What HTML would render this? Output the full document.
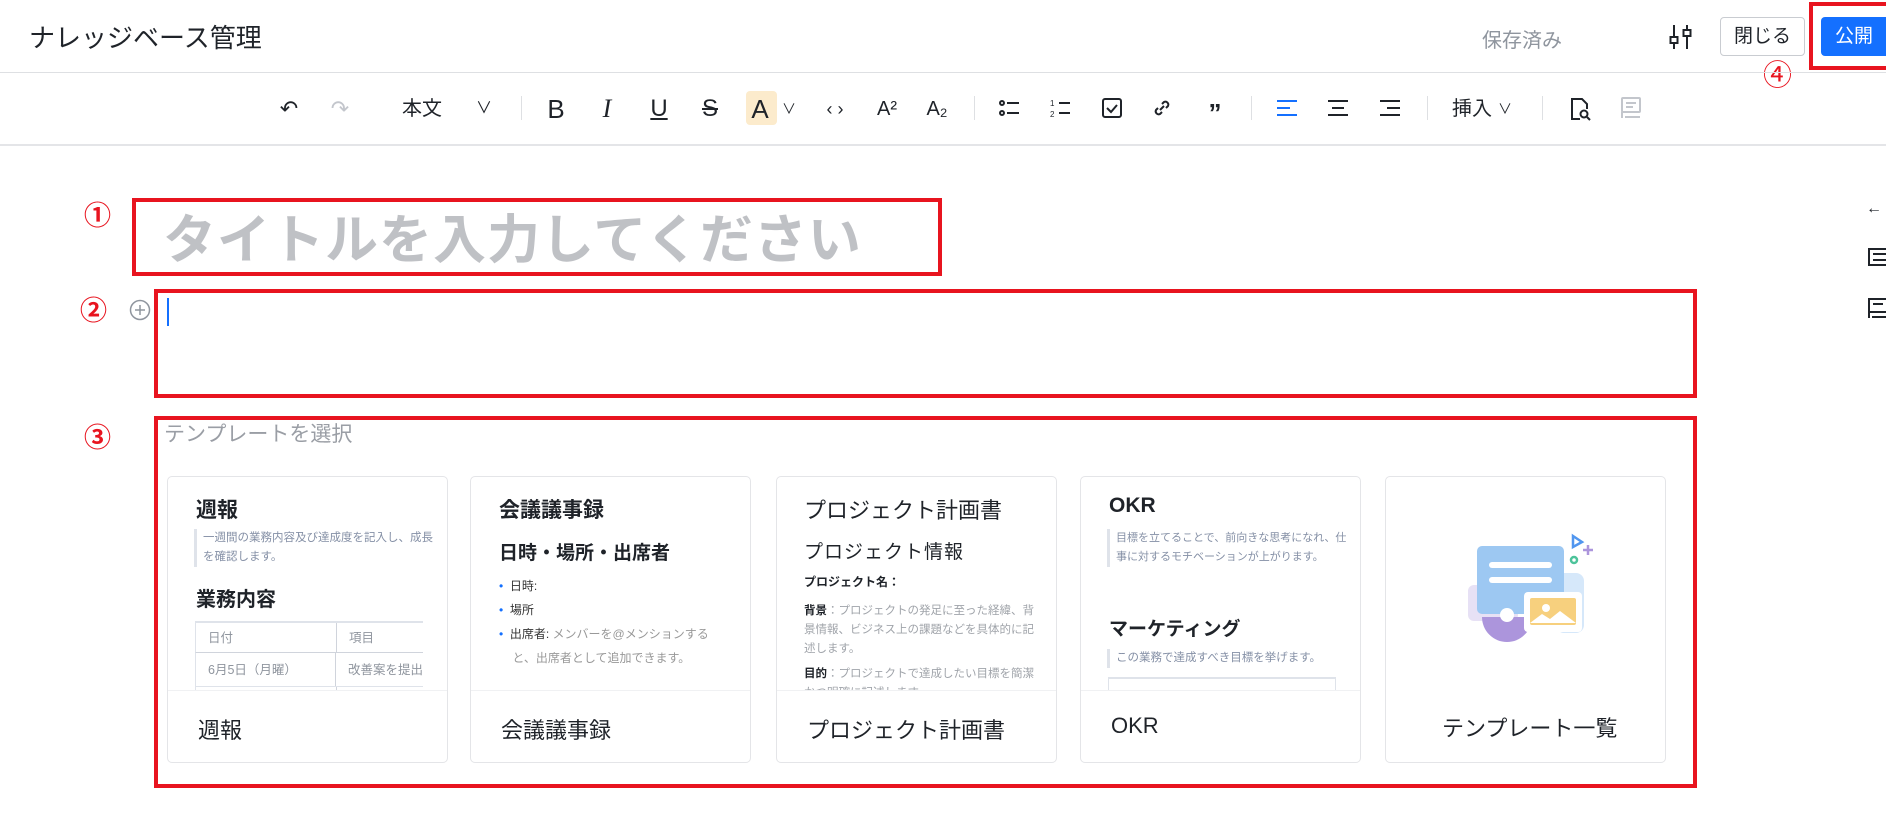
<!DOCTYPE html>
<html><head><meta charset="utf-8"><style>
*{box-sizing:border-box;margin:0;padding:0}
body{width:1886px;height:813px;background:#fff;position:relative;overflow:hidden;font-family:"Liberation Sans","Noto Sans CJK JP",sans-serif;color:#1f2329}
.a{position:absolute;white-space:nowrap}
.red{position:absolute;border:4px solid #e8141f}
.num{position:absolute;color:#e8141f;font-size:27px;font-weight:bold;line-height:1}
.tb{position:absolute;top:92px;height:34px;line-height:34px;font-size:22px;color:#1f2329;transform:translateX(-50%);text-align:center}
.sep{position:absolute;top:96px;width:1px;height:24px;background:#dee0e3}
.card{position:absolute;top:476px;width:281px;height:287px;border:1px solid #e4e5e8;border-radius:5px;overflow:hidden;background:#fff}
.card .top{position:absolute;left:0;top:0;width:100%;height:213px;overflow:hidden}
.card .lbl{position:absolute;left:30px;top:236px;font-size:22px;color:#1f2329}
.card .ln{position:absolute;left:0;right:0;top:213px;height:1px;background:#f0f1f3}
.h{position:absolute;left:28px;font-weight:bold;font-size:21px;color:#1f2329}
.q{position:absolute;left:26px;border-left:3px solid #dfe3ea;padding-left:6px;font-size:11.5px;line-height:19px;color:#8590a6}
.s{font-size:12px;color:#333}
</style></head><body>
<div class="a" style="left:29px;top:18px;font-size:26px;color:#1f2329">ナレッジベース管理</div>
<div class="a" style="left:1482px;top:24px;font-size:20px;color:#8f959e">保存済み</div>
<svg class="a" style="left:1668px;top:23px" width="26" height="28" viewBox="0 0 26 28" fill="none" stroke="#1f2329" stroke-width="2"><line x1="6" y1="2" x2="6" y2="26"/><rect x="2.5" y="14" width="7" height="6" fill="#fff"/><line x1="19" y1="2" x2="19" y2="26"/><rect x="15.5" y="7" width="7" height="6" fill="#fff"/></svg>
<div class="a" style="left:1720px;top:17px;width:85px;height:39px;border:1px solid #c9ccd1;border-radius:4px;font-size:19px;line-height:37px;text-align:center;color:#1f2329">閉じる</div>
<div class="a" style="left:1821px;top:17px;width:70px;height:39px;background:#1470ff;border-radius:4px;font-size:19px;line-height:39px;color:#fff;padding-left:14px">公開</div>
<div class="red" style="left:1809px;top:2px;width:82px;height:68px"></div>
<div class="num" style="left:1763px;top:62px;font-size:29px;font-weight:normal">④</div>
<div class="a" style="left:0;top:72px;width:1886px;height:1px;background:#dee0e3"></div>
<div class="a" style="left:0;top:144px;width:1886px;height:2px;background:#e4e5e8"></div>

<div class="a" style="left:746px;top:91px;width:31px;height:34px;background:#fcebcc;border-radius:4px"></div>
<div class="tb" style="left:289px">↶</div>
<div class="tb" style="left:340px;color:#c3c6cc">↷</div>
<div class="tb" style="left:422px;font-size:20px">本文</div>
<div class="tb" style="left:484px;font-size:16px">∨</div>
<div class="sep" style="left:521px"></div>
<div class="tb" style="left:556px;font-size:26px">B</div>
<div class="tb" style="left:607px;font-size:26px;font-style:italic;font-family:'Liberation Serif',serif">I</div>
<div class="tb" style="left:659px;font-size:24px;text-decoration:underline">U</div>
<div class="tb" style="left:710px;font-size:24px;text-decoration:line-through">S</div>
<div class="tb" style="left:760px;font-size:26px">A</div>
<div class="tb" style="left:789px;font-size:14px">∨</div>
<div class="tb" style="left:835px;font-size:18px">‹ ›</div>
<div class="tb" style="left:887px;font-size:20px">A²</div>
<div class="tb" style="left:937px;font-size:20px">A₂</div>
<div class="sep" style="left:974px"></div>
<svg class="a" style="left:999px;top:99px" width="20" height="18" fill="none" stroke="#1f2329" stroke-width="2"><circle cx="3" cy="4" r="2"/><circle cx="3" cy="14" r="2"/><line x1="8" y1="4" x2="20" y2="4"/><line x1="8" y1="14" x2="20" y2="14"/></svg>
<svg class="a" style="left:1050px;top:98px" width="20" height="20" fill="none" stroke="#1f2329" stroke-width="2"><line x1="9" y1="5" x2="20" y2="5"/><line x1="9" y1="15" x2="20" y2="15"/><text x="0" y="8" font-size="8" fill="#1f2329" stroke="none">1</text><text x="0" y="19" font-size="8" fill="#1f2329" stroke="none">2</text></svg>
<svg class="a" style="left:1102px;top:98px" width="20" height="20" fill="none" stroke="#1f2329" stroke-width="2"><rect x="1" y="1" width="18" height="18" rx="2"/><path d="M5 10l4 4 6-7"/></svg>
<svg class="a" style="left:1152px;top:98px" width="20" height="20" fill="none" stroke="#1f2329" stroke-width="2"><path d="M8 12l4-4M6 10l-2 2a3 3 0 004 4l2-2M14 10l2-2a3 3 0 00-4-4l-2 2"/></svg>
<div class="tb" style="left:1215px;font-size:26px;font-weight:bold;top:96px">”</div>
<div class="sep" style="left:1251px"></div>
<svg class="a" style="left:1277px;top:99px" width="20" height="18" stroke="#1470ff" stroke-width="2"><line x1="0" y1="2" x2="20" y2="2"/><line x1="0" y1="9" x2="13" y2="9"/><line x1="0" y1="16" x2="20" y2="16"/></svg>
<svg class="a" style="left:1328px;top:99px" width="20" height="18" stroke="#1f2329" stroke-width="2"><line x1="0" y1="2" x2="20" y2="2"/><line x1="4" y1="9" x2="16" y2="9"/><line x1="0" y1="16" x2="20" y2="16"/></svg>
<svg class="a" style="left:1380px;top:99px" width="20" height="18" stroke="#1f2329" stroke-width="2"><line x1="0" y1="2" x2="20" y2="2"/><line x1="7" y1="9" x2="20" y2="9"/><line x1="0" y1="16" x2="20" y2="16"/></svg>
<div class="sep" style="left:1427px"></div>
<div class="tb" style="left:1472px;font-size:20px">挿入</div>
<div class="tb" style="left:1505px;font-size:14px">∨</div>
<div class="sep" style="left:1542px"></div>
<svg class="a" style="left:1570px;top:97px" width="22" height="24" fill="none" stroke="#1f2329" stroke-width="2"><path d="M10 22H2V2h10l5 5v5"/><circle cx="14" cy="17" r="3.5"/><line x1="17" y1="20" x2="20" y2="23"/></svg>
<svg class="a" style="left:1621px;top:97px" width="20" height="22" fill="none" stroke="#c3c6cc" stroke-width="2"><rect x="1" y="1" width="18" height="14" rx="1"/><line x1="5" y1="6" x2="15" y2="6"/><line x1="5" y1="10" x2="12" y2="10"/><path d="M1 15v6M4 20h15"/></svg>

<div class="num" style="left:84px;top:203px">①</div>
<div class="red" style="left:132px;top:198px;width:810px;height:78px"></div>
<div class="a" style="left:163px;top:198px;font-size:53px;font-weight:bold;color:#bfc1c5;letter-spacing:1px">タイトルを入力してください</div>
<div class="num" style="left:80px;top:298px">②</div>
<svg class="a" style="left:129px;top:299px" width="22" height="22" fill="none" stroke="#8f959e" stroke-width="1.5"><circle cx="11" cy="11" r="9.5"/><path d="M11 6v10M6 11h10"/></svg>
<div class="a" style="left:167px;top:298px;width:2px;height:28px;background:#1470ff"></div>
<div class="red" style="left:154px;top:289px;width:1543px;height:109px"></div>

<div class="num" style="left:84px;top:425px">③</div>
<div class="red" style="left:154px;top:416px;width:1543px;height:372px"></div>
<div class="a" style="left:164px;top:418px;font-size:21px;color:#9a9ea5">テンプレートを選択</div>

<div class="card" style="left:167px"><div class="top">
<div class="h" style="top:17px">週報</div>
<div class="q" style="top:52px;width:245px;white-space:normal">一週間の業務内容及び達成度を記入し、成長を確認します。</div>
<div class="h" style="top:106px;font-size:20px">業務内容</div>
<div class="a" style="left:27px;top:144px;width:228px;border-top:2px solid #dfe3ea">
<div style="height:30px;border-bottom:1px solid #d0d4dc;border-left:1px solid #dfe3ea;display:flex;font-size:12.5px;color:#8f959e;line-height:30px"><span style="width:141px;padding-left:12px;border-right:1px solid #d0d4dc">日付</span><span style="padding-left:12px">項目</span></div>
<div style="height:34px;border-bottom:1px solid #dfe3ea;border-left:1px solid #dfe3ea;display:flex;font-size:12.5px;color:#8f959e;line-height:34px"><span style="width:141px;padding-left:12px;border-right:1px solid #d0d4dc">6月5日（月曜）</span><span style="padding-left:12px">改善案を提出</span></div>
<div style="height:30px;border-left:1px solid #dfe3ea;display:flex;font-size:12.5px;color:#8f959e;line-height:30px"><span style="width:141px;padding-left:12px;border-right:1px solid #d0d4dc">6月6日（火曜）</span></div>
</div></div><div class="ln"></div><div class="lbl">週報</div></div>

<div class="card" style="left:470px"><div class="top">
<div class="h" style="top:17px">会議議事録</div>
<div class="h" style="top:61px;font-size:19px">日時・場所・出席者</div>
<div class="a s" style="left:28px;top:97px;line-height:24px"><span style="color:#1470ff">•</span>&nbsp; 日時:<br><span style="color:#1470ff">•</span>&nbsp; 場所<br><span style="color:#1470ff">•</span>&nbsp; 出席者: <span style="color:#999">メンバーを@メンションする</span><br><span style="color:#999">&nbsp;&nbsp;&nbsp;&nbsp;と、出席者として追加できます。</span></div>
</div><div class="ln"></div><div class="lbl">会議議事録</div></div>

<div class="card" style="left:776px"><div class="top">
<div class="a" style="left:27px;top:16px;font-size:22px">プロジェクト計画書</div>
<div class="a" style="left:27px;top:60px;font-size:19px;letter-spacing:1px">プロジェクト情報</div>
<div class="a" style="left:27px;top:96px;font-size:12px;font-weight:bold">プロジェクト名：</div>
<div class="a" style="left:27px;top:125px;font-size:11.5px;line-height:19px;color:#a0a4aa;white-space:normal;width:230px"><b style="color:#1f2329">背景</b>：プロジェクトの発足に至った経緯、背景情報、ビジネス上の課題などを具体的に記述します。</div>
<div class="a" style="left:27px;top:188px;font-size:11.5px;line-height:19px;color:#a0a4aa;white-space:normal;width:230px"><b style="color:#1f2329">目的</b>：プロジェクトで達成したい目標を簡潔かつ明確に記述します。</div>
</div><div class="ln"></div><div class="lbl">プロジェクト計画書</div></div>

<div class="card" style="left:1080px"><div class="top">
<div class="h" style="top:17px">OKR</div>
<div class="q" style="top:52px;width:250px;white-space:normal;font-size:11px">目標を立てることで、前向きな思考になれ、仕事に対するモチベーションが上がります。</div>
<div class="h" style="top:137px;font-size:19px">マーケティング</div>
<div class="q" style="top:172px">この業務で達成すべき目標を挙げます。</div>
<div class="a" style="left:27px;top:200px;width:228px;height:30px;border:1px solid #dfe3ea;border-top:2px solid #dfe3ea"></div>
</div><div class="ln"></div><div class="lbl">OKR</div></div>

<div class="card" style="left:1385px"><div class="top">
<svg class="a" style="left:0;top:0" width="280" height="213">
<rect x="82" y="108" width="50" height="36" rx="6" fill="#e7e1f5"/>
<path d="M96 140a25 25 0 0050 0z" fill="#ac95dc"/>
<rect x="170" y="96" width="28" height="60" rx="8" fill="#d6e8fa"/>
<rect x="91" y="69" width="87" height="68" rx="5" fill="#9dc8f2"/>
<circle cx="121" cy="138" r="7" fill="#fff"/>
<rect x="103" y="85" width="63" height="6" rx="3" fill="#fff"/>
<rect x="103" y="100" width="63" height="6" rx="3" fill="#fff"/>
<rect x="138" y="115" width="58" height="40" rx="4" fill="#fff"/>
<rect x="144" y="121" width="46" height="27" rx="2" fill="#f7d07e"/>
<circle cx="160" cy="131" r="4" fill="#fff"/>
<path d="M144 146l12-9 8 5 10-8 16 12z" fill="#fff"/>
<path d="M187 59l9 6-9 5z" fill="none" stroke="#5196ef" stroke-width="2.5"/>
<path d="M202 68v10M197 73h10" stroke="#ac95dc" stroke-width="2.5"/>
<circle cx="188" cy="83" r="3" fill="none" stroke="#4cc39a" stroke-width="2.5"/>
</svg></div><div class="lbl" style="left:56px;top:234px">テンプレート一覧</div></div>

<div class="a" style="left:1866px;top:200px;font-size:16px">←</div>
<svg class="a" style="left:1868px;top:248px" width="20" height="18" fill="none" stroke="#1f2329" stroke-width="2"><rect x="1" y="1" width="22" height="16"/><line x1="5" y1="6" x2="20" y2="6"/><line x1="5" y1="12" x2="20" y2="12"/></svg>
<svg class="a" style="left:1868px;top:298px" width="20" height="20" fill="none" stroke="#1f2329" stroke-width="2"><rect x="1" y="1" width="22" height="13"/><line x1="5" y1="6" x2="15" y2="6"/><path d="M1 14v6M4 19h16"/></svg>
</body></html>
